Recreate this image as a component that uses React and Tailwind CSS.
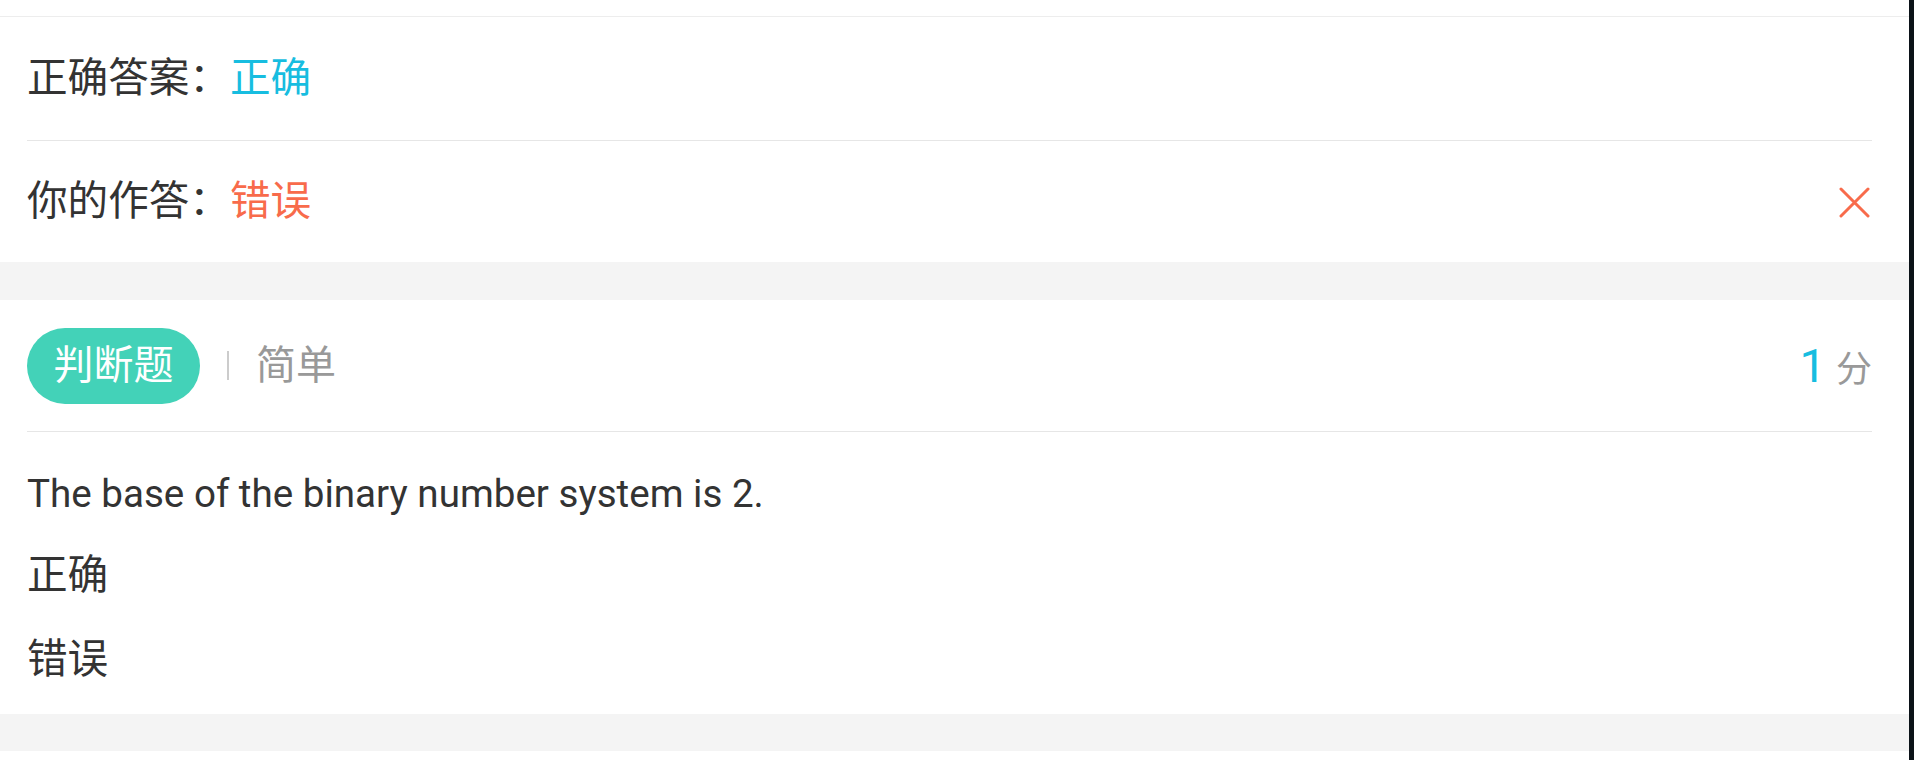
const font = { fontFamily: 'Roboto, "Noto Sans CJK SC", sans-serif' };

const CrossIcon = () => (
  <svg width="31" height="31" viewBox="0 0 31 31" className="text-[#f86b4b]">
    <path d="M2 2 L29 29 M29 2 L2 29" stroke="currentColor" strokeWidth="3" strokeLinecap="round" fill="none" />
  </svg>
);

const AnswerRow = ({ label, value, valueClass, last, children }) => (
  <div
    className={`flex items-center justify-between ml-[27px] mr-[37px] box-border ${
      last ? 'h-[121px]' : 'h-[124px] border-b border-[#e6e6e6]'
    }`}
  >
    <div className="text-[40.6px] leading-none text-[#333333]">
      {label}
      <span className={valueClass}>{value}</span>
    </div>
    {children}
  </div>
);

export default function App() {
  return (
    <div className="flex w-full h-[760px] bg-white overflow-hidden" style={font}>
      <div className="flex-1 flex flex-col">
        {/* top edge of previous card */}
        <div className="h-[17px] box-border border-b border-[#ededed] bg-white" />

        {/* answer card */}
        <div className="bg-white">
          <AnswerRow label="正确答案：" value="正确" valueClass="text-[#17bde0]" />
          <AnswerRow label="你的作答：" value="错误" valueClass="text-[#f86b4b]" last>
            <span className="mr-[2px] mt-[2px] flex">
              <CrossIcon />
            </span>
          </AnswerRow>
        </div>

        <div className="h-[38px] bg-[#f4f4f4]" />

        {/* question card */}
        <div className="bg-white">
          <div className="flex items-center justify-between h-[132px] box-border border-b border-[#e6e6e6] ml-[27px] mr-[37px]">
            <div className="flex items-center">
              <span className="flex items-center justify-center h-[76px] w-[173px] rounded-full bg-[#43d2b8] text-white text-[40px] leading-none">
                判断题
              </span>
              <span className="w-[2px] h-[29px] bg-[#cccccc] mx-[27px]" />
              <span className="text-[40px] leading-none text-[#999999]">简单</span>
            </div>
            <div className="flex items-baseline">
              <span className="text-[47px] leading-none text-[#17bde0]">1</span>
              <span className="text-[36px] leading-none text-[#999999] ml-[10px]">分</span>
            </div>
          </div>

          <div className="flex flex-col ml-[27px] mr-[37px] pb-[27px] text-[#333333]">
            <p className="mt-[34px] h-[56px] flex items-center text-[38.6px] leading-none">
              The base of the binary number system is 2.
            </p>
            <p className="mt-[25px] h-[56px] flex items-center text-[40.6px] leading-none">正确</p>
            <p className="mt-[28px] h-[56px] flex items-center text-[40.6px] leading-none">错误</p>
          </div>
        </div>

        <div className="h-[37px] bg-[#f4f4f4] shrink-0" />
        <div className="flex-1 bg-white" />
      </div>
      <div className="w-[5px] bg-[#0b1218]" />
    </div>
  );
}
